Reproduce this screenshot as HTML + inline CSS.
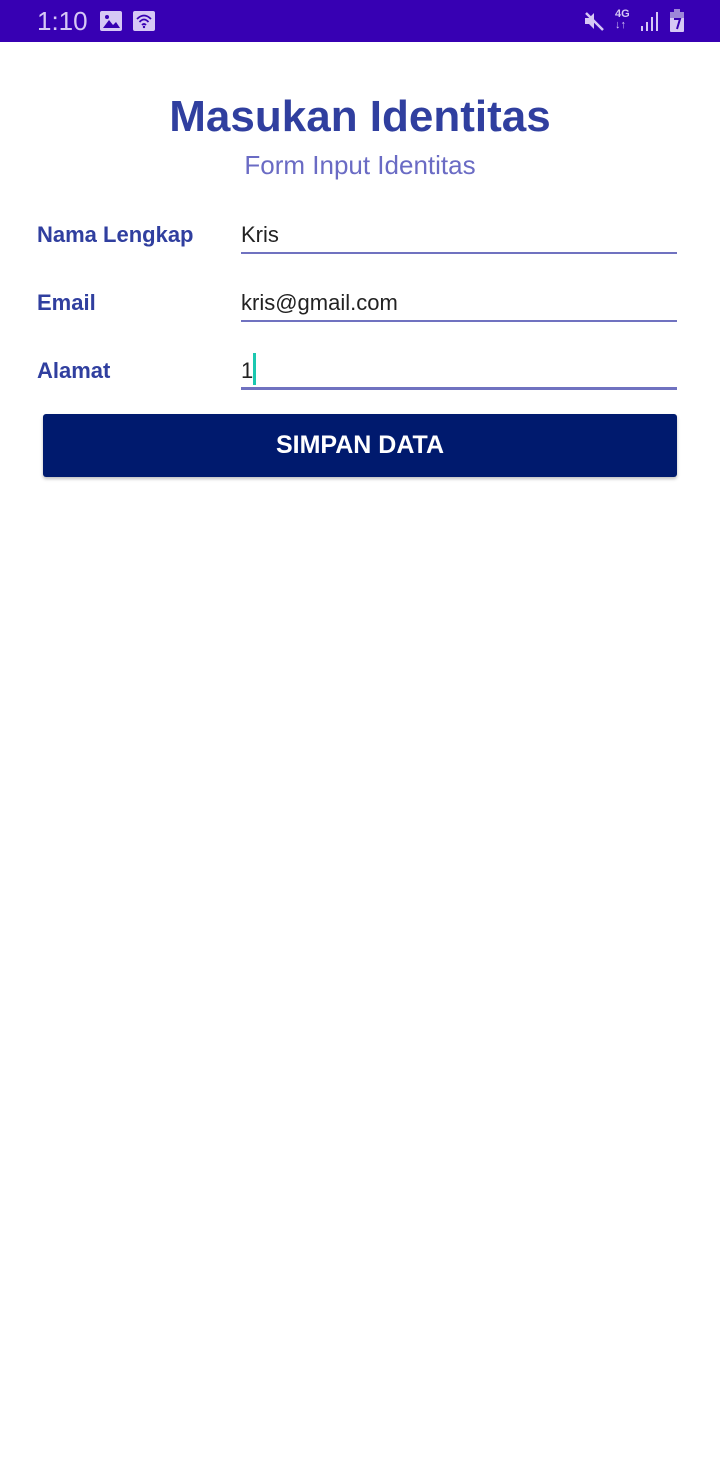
<!DOCTYPE html>
<html><head><meta charset="utf-8"><style>
*{margin:0;padding:0;box-sizing:border-box}
body{width:720px;height:1480px;background:#fff;font-family:"Liberation Sans",Roboto,sans-serif;position:relative;overflow:hidden}
.sb{position:absolute;left:0;top:0;width:720px;height:42px;background:#3700b3;color:#d6c8f5}
.abs{position:absolute}
.lbl{position:absolute;left:37px;color:#303f9f;font-weight:bold;font-size:22px}
.val{position:absolute;left:241px;color:#222;font-size:22px}
.ul{position:absolute;left:241px;width:436px;background:#7072c0}
</style></head><body>
<div class="sb">
 <div class="abs" style="left:37px;top:6px;font-size:26px;color:#d6c8f5">1:10</div>
 <svg class="abs" style="left:100px;top:11px" width="22" height="20"><rect x="0" y="0" width="22" height="20" rx="2" fill="#d6c8f5"/><path d="M3 17 L9 9 L13 14 L16 11 L20 17Z" fill="#3700b3"/><circle cx="7" cy="6" r="2" fill="#3700b3"/></svg>
 <svg class="abs" style="left:133px;top:11px" width="22" height="20"><rect x="0" y="0" width="22" height="20" rx="2" fill="#d6c8f5"/><path d="M4 8 Q11 1 18 8 M6.5 11 Q11 6 15.5 11 M9 14 Q11 12 13 14" stroke="#3700b3" stroke-width="1.8" fill="none"/><circle cx="11" cy="16" r="1.2" fill="#3700b3"/></svg>
 <svg class="abs" style="left:583px;top:10px" width="22" height="22"><path d="M2 8 H6 L11 3 V19 L6 14 H2Z" fill="#d6c8f5"/><path d="M3 3 L20 20" stroke="#d6c8f5" stroke-width="2.5"/></svg>
 <div class="abs" style="left:615px;top:9px;font-size:11px;font-weight:bold;line-height:11px">4G<br>↓↑</div>
 <svg class="abs" style="left:640px;top:11px" width="20" height="20"><rect x="1" y="15" width="2" height="5" fill="#d6c8f5"/><rect x="6" y="11" width="2" height="9" fill="#d6c8f5"/><rect x="11" y="6" width="2" height="14" fill="#d6c8f5"/><rect x="16" y="1" width="2" height="19" fill="#d6c8f5"/></svg>
 <svg class="abs" style="left:669px;top:9px" width="16" height="24"><rect x="5" y="0" width="6" height="3" fill="#9d86d8"/><rect x="1" y="3" width="14" height="20" rx="1" fill="#d6c8f5"/><rect x="1" y="3" width="14" height="6" fill="#9d86d8"/><path d="M5 10 H11 L8 20" stroke="#3700b3" stroke-width="2" fill="none"/></svg>
</div>
<div class="abs" style="left:0;width:720px;top:92px;text-align:center;font-size:44px;font-weight:bold;color:#303f9f">Masukan Identitas</div>
<div class="abs" style="left:0;width:720px;top:150px;text-align:center;font-size:26px;color:#6a6bc4">Form Input Identitas</div>
<div class="lbl" style="top:222px">Nama Lengkap</div>
<div class="val" style="top:222px">Kris</div>
<div class="ul" style="top:252px;height:2px"></div>
<div class="lbl" style="top:290px">Email</div>
<div class="val" style="top:290px">kris@gmail.com</div>
<div class="ul" style="top:320px;height:2px"></div>
<div class="lbl" style="top:358px">Alamat</div>
<div class="val" style="top:358px">1</div>
<div class="abs" style="left:253px;top:353px;width:3px;height:32px;background:#1bc8b0"></div>
<div class="ul" style="top:387px;height:3px"></div>
<div class="abs" style="left:43px;top:414px;width:634px;height:63px;background:#001a6e;border-radius:3px;box-shadow:0 2px 3px rgba(0,0,0,.25);color:#fff;font-size:25px;font-weight:bold;text-align:center;line-height:63px">SIMPAN DATA</div>
</body></html>
